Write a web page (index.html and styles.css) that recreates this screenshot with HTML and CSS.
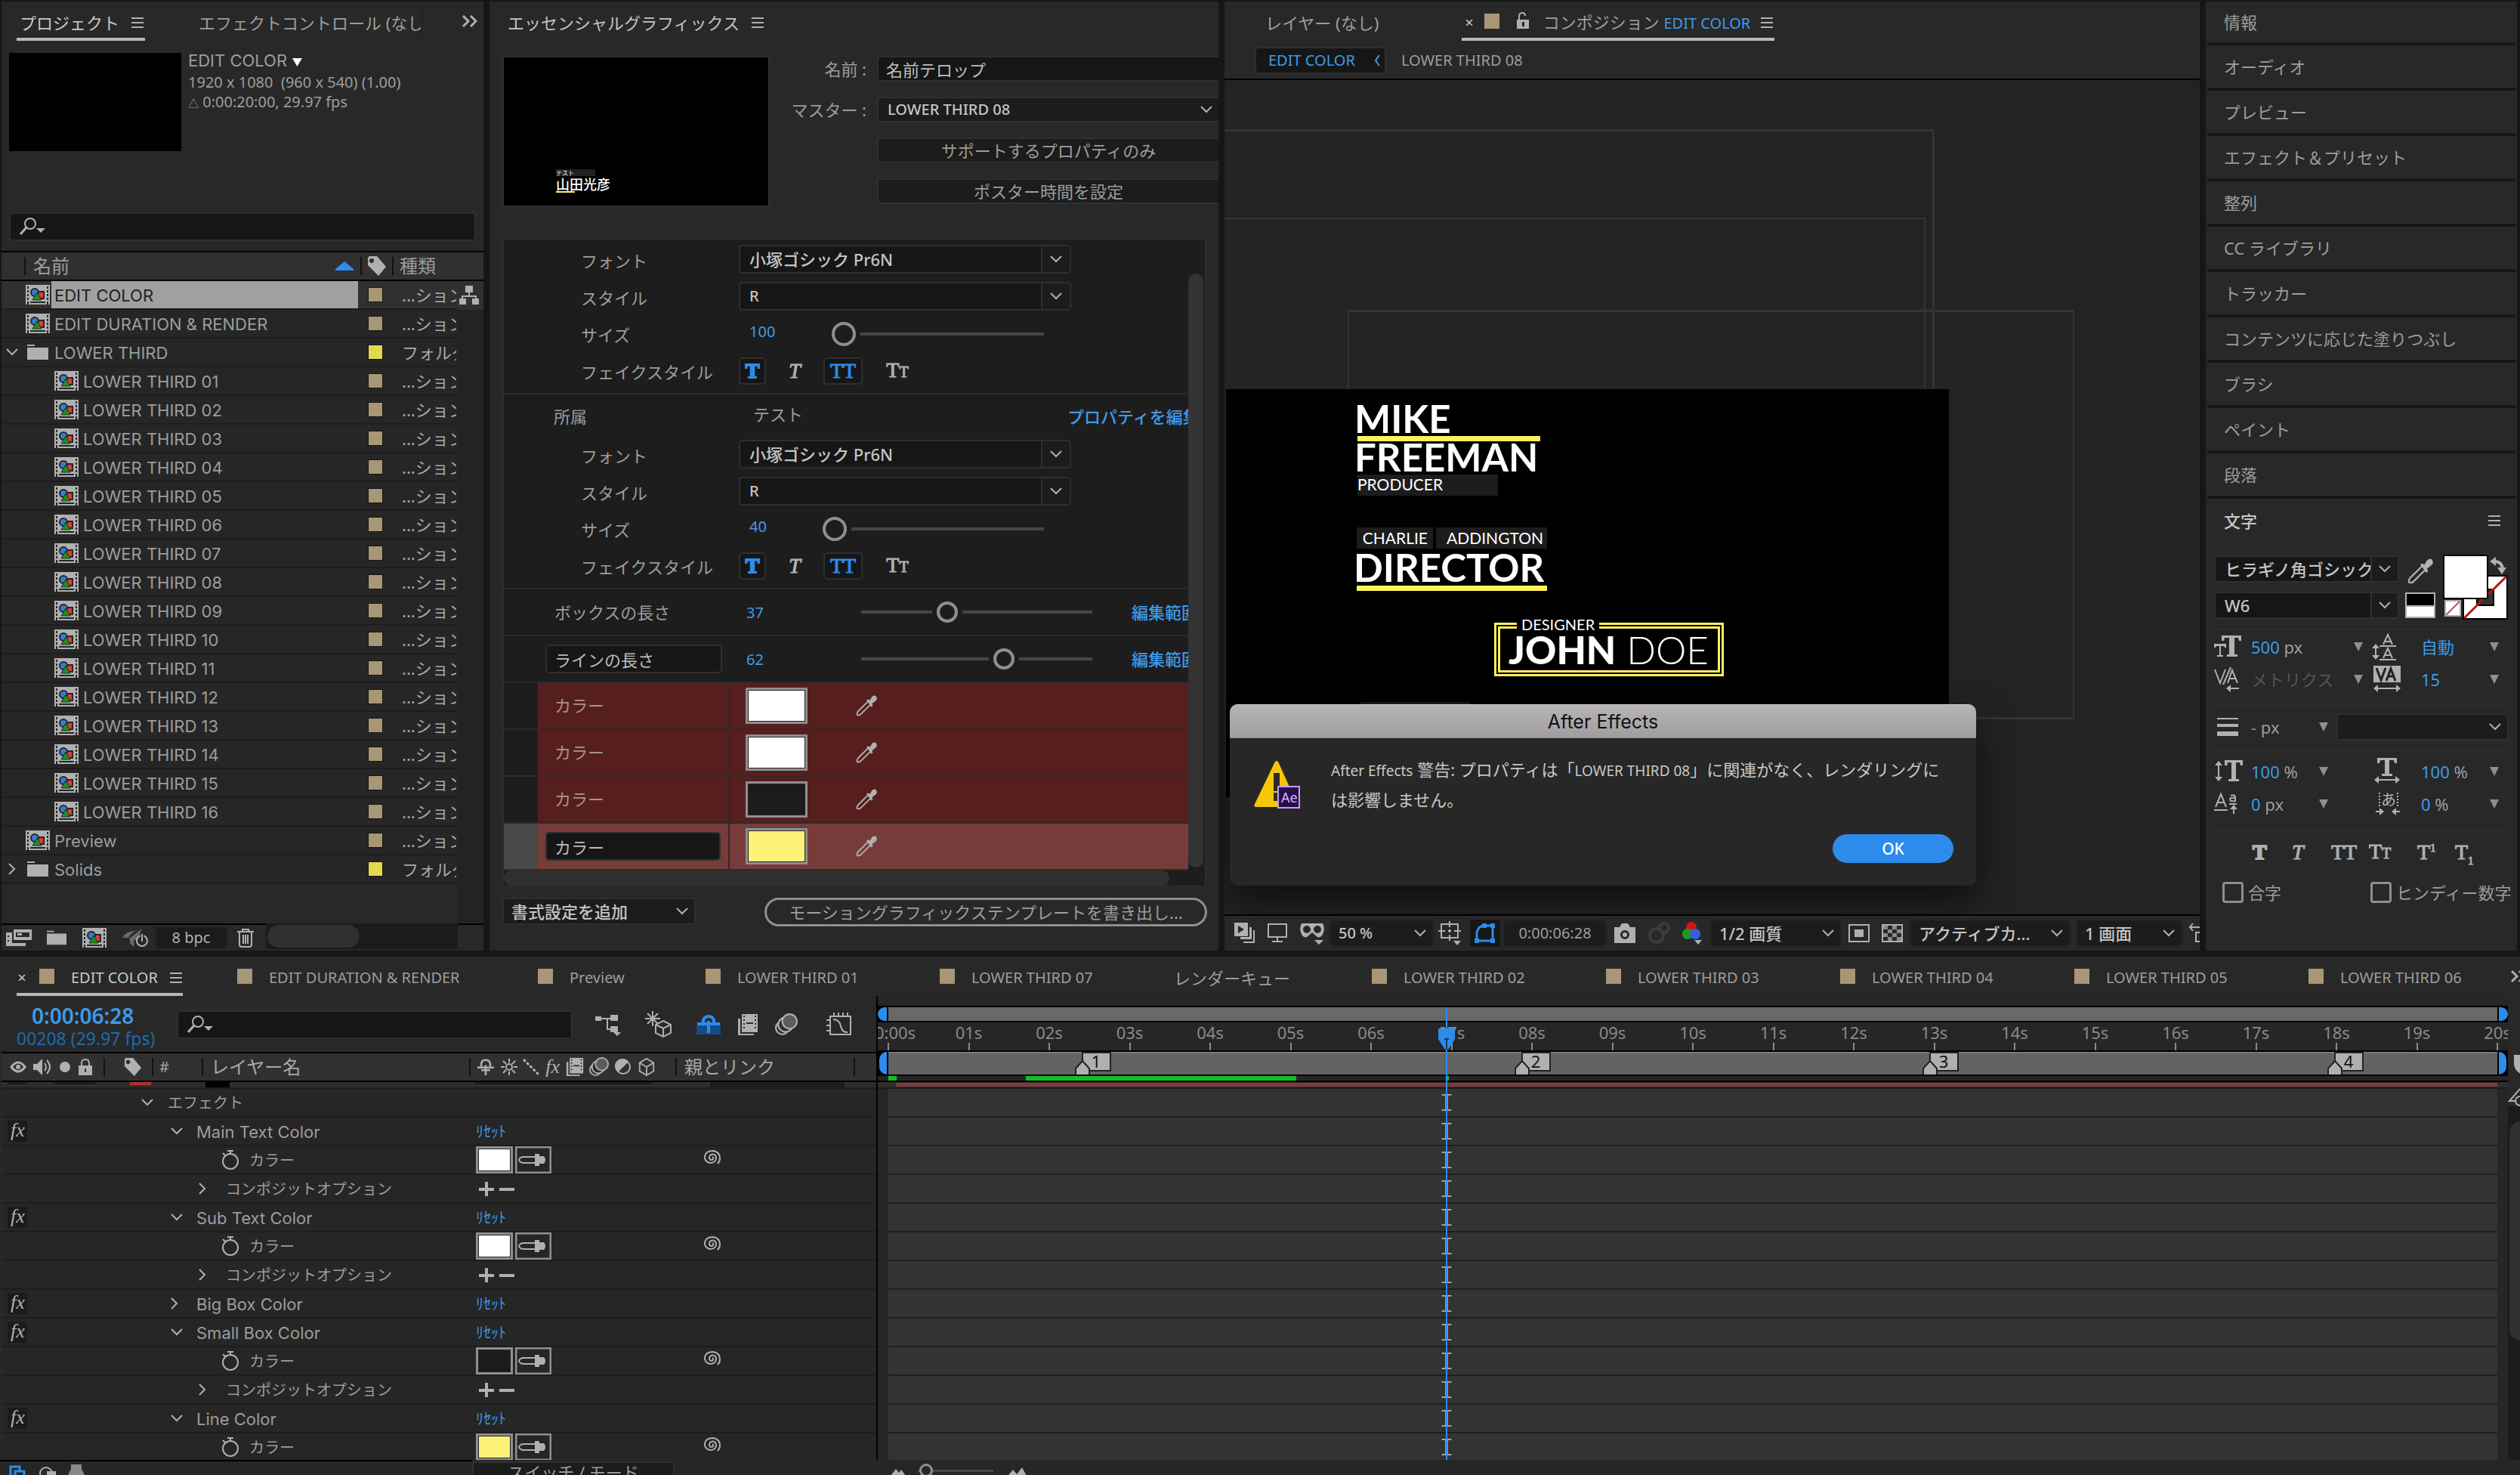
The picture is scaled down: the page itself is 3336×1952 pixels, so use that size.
FILE: index.html
```html
<!DOCTYPE html>
<html lang="ja">
<head>
<meta charset="utf-8">
<title>After Effects</title>
<link rel="stylesheet" href="styles.css">
</head>
<body>
<svg class="defs" aria-hidden="true">
  <symbol id="menu" viewBox="0 0 16 14"><path fill="currentColor" d="M0 0h16v2H0zM0 6h16v2H0zM0 12h16v2H0z"/></symbol>
  <symbol id="down" viewBox="0 0 16 10"><path fill="none" stroke="currentColor" stroke-width="2" d="M1 1l7 7 7-7"/></symbol>
  <symbol id="right" viewBox="0 0 10 16"><path fill="none" stroke="currentColor" stroke-width="2" d="M1 1l7 7-7 7"/></symbol>
  <symbol id="more" viewBox="0 0 20 16"><path fill="none" stroke="currentColor" stroke-width="3" d="M1 1l7 7-7 7M11 1l7 7-7 7"/></symbol>
  <symbol id="tri" viewBox="0 0 12 12"><path fill="currentColor" d="M0 0h12L6 12z"/></symbol>
  <symbol id="comp" viewBox="0 0 32 26"><path fill="#b0b0b0" d="M0 0h32v26H0z"/><path fill="#262626" d="M2 2h2v3H2zM2 7h2v3H2zM2 12h2v3H2zM2 17h2v3H2zM2 22h2v4H2zM28 2h2v3h-2zM28 7h2v3h-2zM28 12h2v3h-2zM28 17h2v3h-2zM28 22h2v4h-2zM6 22h20v2H6z"/><path fill="#e23b36" stroke="#262626" stroke-width="2" d="M14 9h10v9H14z"/><circle cx="12" cy="10" r="5" fill="#2f7fd6" stroke="#262626" stroke-width="2"/><path fill="#1a9121" stroke="#262626" d="M15 10l6 10H9z"/></symbol>
  <symbol id="folder" viewBox="0 0 28 20"><path fill="#b0b0b0" d="M0 0h10v2H0zM0 4h28v16H0z"/></symbol>
  <symbol id="tag" viewBox="0 0 24 26"><path fill="#b0b0b0" fill-rule="evenodd" d="M0 2l2-2h10l12 14-10 12L0 12zM5 3a3 3 0 100 6 3 3 0 000-6z"/></symbol>
  <symbol id="search" viewBox="0 0 34 24"><circle cx="14" cy="8" r="7" fill="none" stroke="#b0b0b0" stroke-width="2"/><path stroke="#b0b0b0" stroke-width="3" d="M9 13L1 22"/><path fill="#b0b0b0" d="M22 14h12l-6 6z"/></symbol>
  <symbol id="dropper" viewBox="0 0 30 30"><path fill="none" stroke="#b0b0b0" stroke-width="2" d="M17 9L3 23q-2 3-1 5 3 1 5-1l14-14"/><path fill="#b0b0b0" d="M15 7l2-1 3 1 3-5q4-3 6 0 2 4-1 6l-5 4 1 3-2 2z"/></symbol>
  <symbol id="watch" viewBox="0 0 22 26"><circle cx="11" cy="15" r="10" fill="none" stroke="#b0b0b0" stroke-width="2"/><path stroke="#b0b0b0" stroke-width="2" d="M7 1h8M11 1v4M1 4l4 4"/></symbol>
  <symbol id="spiral" viewBox="0 0 24 22"><path fill="none" stroke="#b0b0b0" stroke-width="2" d="M12 9c2 1 1 4-1 4-3 0-4-3-2-6 3-3 8-1 8 3 0 5-4 7-8 7-5-1-8-5-7-9 1-5 6-7 11-7 6 1 9 5 9 10 0 3-1 5-3 7"/></symbol>
  <symbol id="pipette" viewBox="0 0 48 36"><path fill="none" stroke="#8f8f8f" stroke-width="3" d="M1 1h46v34H1z"/><path fill="none" stroke="#b0b0b0" stroke-width="2" d="M28 14H12q-6 0-7 4 1 4 7 4h16"/><path fill="#b0b0b0" d="M26 10h6v3h6q4 5 0 10h-6v3h-6z"/></symbol>
  <symbol id="shy" viewBox="0 0 26 26"><path fill="none" stroke="currentColor" stroke-width="3" d="M6 12V8q1-6 7-6t7 6v4M0 14h26M13 10v16M6 18h14"/></symbol>
  <symbol id="film" viewBox="0 0 26 28"><path fill="#b0b0b0" d="M5 0h21v24H5zM0 6h3v20h18v2H0z"/><path fill="#2c2c2c" d="M7 2h2v2H7zM7 7h2v2H7zM7 12h2v2H7zM7 17h2v2H7zM22 2h2v2h-2zM22 7h2v2h-2zM22 12h2v2h-2zM22 17h2v2h-2zM11 11h9v2h-9z"/></symbol>
  <symbol id="blur" viewBox="0 0 28 28"><circle cx="9" cy="18" r="8" fill="none" stroke="#b0b0b0" stroke-width="2"/><circle cx="13" cy="14" r="9" fill="#2c2c2c" stroke="#b0b0b0" stroke-width="2"/><circle cx="18" cy="10" r="9" fill="#5c5c5c" stroke="#b0b0b0" stroke-width="2"/></symbol>
  <symbol id="cube" viewBox="0 0 24 26"><path fill="none" stroke="#b0b0b0" stroke-width="2" d="M12 1l10 6v12l-10 6-10-6V7zM2 7l10 6 10-6M12 13v12"/></symbol>
  <symbol id="lock" viewBox="0 0 20 22"><path fill="none" stroke="#b0b0b0" stroke-width="2" d="M5 10V6q0-5 5-5t5 5v4"/><path fill="#b0b0b0" fill-rule="evenodd" d="M1 9h18v13H1zM9 13v5h2v-5z"/></symbol>
  <symbol id="ibeam" viewBox="0 0 14 24"><path fill="#b0b0b0" d="M0 0h14v2H9v20h5v2H0v-2h5V2H0z"/></symbol>
  <symbol id="pin" viewBox="0 0 48 30"><path fill="#b0b0b0" stroke="#222" stroke-width="2" d="M10 1h37v24H19L10 20z"/><path fill="#b0b0b0" stroke="#222" stroke-width="2" d="M1 30V22l9-10 9 10v8"/></symbol>
</svg>

<main class="workspace">

<section class="panel project">
  <nav class="tabs">
    <button class="tab active first">プロジェクト<svg class="menu"><use href="#menu"/></svg></button>
    <button class="tab second"><span>エフェクトコントロール (なし)</span></button>
    <button class="icon-btn overflow" aria-label="その他"><svg width="20" height="16"><use href="#more"/></svg></button>
  </nav>
  <div class="info">
    <div class="thumb"></div>
    <div class="meta"><b class="sf">EDIT COLOR <i>▼</i></b>1920 x 1080&nbsp; (960 x 540) (1.00)<br><small>△</small> 0:00:20:00, 29.97 fps</div>
  </div>
  <label class="search"><svg width="34" height="24"><use href="#search"/></svg><input type="text" aria-label="検索"></label>
  <table class="files">
    <colgroup><col class="c-name"><col class="c-label"><col class="c-type"><col class="c-end"></colgroup>
    <thead><tr><th><div class="th-name"><span>名前</span><svg width="24" height="12"><path fill="#2d8ceb" d="M12 0l12 10v2H0v-2z"/></svg></div></th><th><div class="th-sep"><svg width="24" height="26"><use href="#tag"/></svg></div></th><th colspan="2"><div class="th-sep wide">種類</div></th></tr></thead>
    <tbody>
    <tr class="sel"><td><div class="f"><svg class="ic"><use href="#comp"/></svg><span>EDIT COLOR</span></div></td><td><i class="sw"></i></td><td>...ション</td><td class="end"><svg width="26" height="26"><path fill="#b0b0b0" d="M8 0h10v9H8zM0 17h9v8H0zM17 17h9v8h-9zM12 9h2v4h9v4h-2v-2H5v2H3v-4h9z"/></svg></td></tr>
    <tr><td><div class="f"><svg class="ic"><use href="#comp"/></svg><span>EDIT DURATION &amp; RENDER</span></div></td><td><i class="sw"></i></td><td>...ション</td><td class="end"></td></tr>
    <tr><td><div class="f open"><svg class="tw" width="16" height="10"><use href="#down"/></svg><svg class="fo"><use href="#folder"/></svg><span>LOWER THIRD</span></div></td><td><i class="sw y"></i></td><td>フォルダー</td><td class="end"></td></tr>
    <tr><td><div class="f kid"><svg class="ic"><use href="#comp"/></svg><span>LOWER THIRD 01</span></div></td><td><i class="sw"></i></td><td>...ション</td><td class="end"></td></tr>
    <tr><td><div class="f kid"><svg class="ic"><use href="#comp"/></svg><span>LOWER THIRD 02</span></div></td><td><i class="sw"></i></td><td>...ション</td><td class="end"></td></tr>
    <tr><td><div class="f kid"><svg class="ic"><use href="#comp"/></svg><span>LOWER THIRD 03</span></div></td><td><i class="sw"></i></td><td>...ション</td><td class="end"></td></tr>
    <tr><td><div class="f kid"><svg class="ic"><use href="#comp"/></svg><span>LOWER THIRD 04</span></div></td><td><i class="sw"></i></td><td>...ション</td><td class="end"></td></tr>
    <tr><td><div class="f kid"><svg class="ic"><use href="#comp"/></svg><span>LOWER THIRD 05</span></div></td><td><i class="sw"></i></td><td>...ション</td><td class="end"></td></tr>
    <tr><td><div class="f kid"><svg class="ic"><use href="#comp"/></svg><span>LOWER THIRD 06</span></div></td><td><i class="sw"></i></td><td>...ション</td><td class="end"></td></tr>
    <tr><td><div class="f kid"><svg class="ic"><use href="#comp"/></svg><span>LOWER THIRD 07</span></div></td><td><i class="sw"></i></td><td>...ション</td><td class="end"></td></tr>
    <tr><td><div class="f kid"><svg class="ic"><use href="#comp"/></svg><span>LOWER THIRD 08</span></div></td><td><i class="sw"></i></td><td>...ション</td><td class="end"></td></tr>
    <tr><td><div class="f kid"><svg class="ic"><use href="#comp"/></svg><span>LOWER THIRD 09</span></div></td><td><i class="sw"></i></td><td>...ション</td><td class="end"></td></tr>
    <tr><td><div class="f kid"><svg class="ic"><use href="#comp"/></svg><span>LOWER THIRD 10</span></div></td><td><i class="sw"></i></td><td>...ション</td><td class="end"></td></tr>
    <tr><td><div class="f kid"><svg class="ic"><use href="#comp"/></svg><span>LOWER THIRD 11</span></div></td><td><i class="sw"></i></td><td>...ション</td><td class="end"></td></tr>
    <tr><td><div class="f kid"><svg class="ic"><use href="#comp"/></svg><span>LOWER THIRD 12</span></div></td><td><i class="sw"></i></td><td>...ション</td><td class="end"></td></tr>
    <tr><td><div class="f kid"><svg class="ic"><use href="#comp"/></svg><span>LOWER THIRD 13</span></div></td><td><i class="sw"></i></td><td>...ション</td><td class="end"></td></tr>
    <tr><td><div class="f kid"><svg class="ic"><use href="#comp"/></svg><span>LOWER THIRD 14</span></div></td><td><i class="sw"></i></td><td>...ション</td><td class="end"></td></tr>
    <tr><td><div class="f kid"><svg class="ic"><use href="#comp"/></svg><span>LOWER THIRD 15</span></div></td><td><i class="sw"></i></td><td>...ション</td><td class="end"></td></tr>
    <tr><td><div class="f kid"><svg class="ic"><use href="#comp"/></svg><span>LOWER THIRD 16</span></div></td><td><i class="sw"></i></td><td>...ション</td><td class="end"></td></tr>
    <tr><td><div class="f"><svg class="ic"><use href="#comp"/></svg><span>Preview</span></div></td><td><i class="sw"></i></td><td>...ション</td><td class="end"></td></tr>
    <tr><td><div class="f open"><svg class="tw" width="16" height="16"><use href="#right"/></svg><svg class="fo"><use href="#folder"/></svg><span>Solids</span></div></td><td><i class="sw y"></i></td><td>フォルダー</td><td class="end"></td></tr>
    </tbody>
  </table>
  <div class="fill"><div class="gutter"></div></div>
  <footer class="pfoot">
    <button class="icon-btn" aria-label="フッテージを変換"><svg width="34" height="22"><path fill="#b0b0b0" fill-rule="evenodd" d="M10 0h24v14H10zM13 4v6h18V4zM0 4h8v14h18v4H0zM2 8v2h2V8zM2 14v2h2v-2z"/><path fill="#b0b0b0" d="M15 5h6v3h-6z"/></svg></button>
    <button class="icon-btn" aria-label="新規フォルダー"><svg width="26" height="20"><use href="#folder"/></svg></button>
    <button class="icon-btn" aria-label="新規コンポジション"><svg width="34" height="26"><use href="#comp"/></svg></button>
    <button class="icon-btn" aria-label="プロジェクト設定"><svg width="34" height="26"><path fill="#6a6a6a" d="M26 1q-12 2-18 12H0q3-6 10-8l6-1zM10 15l6 4-1 6-5-5zM26 1l-6 13-8 5-3-5z"/><circle cx="26" cy="17" r="7" fill="#282828" stroke="#b0b0b0" stroke-width="2"/><path stroke="#282828" stroke-width="5" d="M26 8v6"/><path stroke="#b0b0b0" stroke-width="2" d="M26 8v10"/></svg></button>
    <button class="bpc">8 bpc</button>
    <button class="icon-btn" aria-label="削除"><svg width="22" height="26"><path fill="none" stroke="#b0b0b0" stroke-width="2" d="M0 5h22M7 5V2h8v3M3 5v17q0 3 3 3h10q3 0 3-3V5M8 9v12M11 9v12M14 9v12"/></svg></button>
    <div class="hscroll"><i></i></div>
  </footer>
</section>

<section class="panel eg">
  <nav class="tabs"><button class="tab">エッセンシャルグラフィックス<svg class="menu"><use href="#menu"/></svg></button></nav>
  <div class="eg-top">
    <div class="poster"><div class="telop"><small>テスト</small><b>山田光彦</b></div></div>
    <div class="eg-form">
      <label for="egname">名前 :</label><input id="egname" class="field" type="text" value="名前テロップ">
      <label for="egmaster">マスター :</label><div class="select"><select id="egmaster" class="en"><option>LOWER THIRD 08</option></select><svg width="16" height="10"><use href="#down"/></svg></div>
      <button class="flat">サポートするプロパティのみ</button>
      <button class="flat">ポスター時間を設定</button>
    </div>
  </div>
  <div class="scroller">
    <div class="props">
      <div class="group top">
        <div class="sub"><label for="f1">フォント</label><div class="select split"><select id="f1"><option>小塚ゴシック Pr6N</option></select><svg width="16" height="10"><use href="#down"/></svg></div></div>
        <div class="sub"><label for="s1">スタイル</label><div class="select split"><select id="s1" class="en"><option>R</option></select><svg width="16" height="10"><use href="#down"/></svg></div></div>
        <div class="sub"><label for="z1">サイズ</label><output>100</output><input id="z1" class="size" type="range" min="25" max="1340" value="100"></div>
        <div class="sub"><span>フェイクスタイル</span><div class="fake"><button class="on b">T</button><button class="i">T</button><button class="on">TT</button><button>T<small>T</small></button></div></div>
      </div>
      <div class="group">
        <div class="head"><span>所属</span><span class="val">テスト</span><a href="#edit">プロパティを編集</a></div>
        <div class="sub"><label for="f2">フォント</label><div class="select split"><select id="f2"><option>小塚ゴシック Pr6N</option></select><svg width="16" height="10"><use href="#down"/></svg></div></div>
        <div class="sub"><label for="s2">スタイル</label><div class="select split"><select id="s2" class="en"><option>R</option></select><svg width="16" height="10"><use href="#down"/></svg></div></div>
        <div class="sub"><label for="z2">サイズ</label><output>40</output><input id="z2" class="size" type="range" min="25" max="1340" value="40"></div>
        <div class="sub"><span>フェイクスタイル</span><div class="fake"><button class="on b">T</button><button class="i">T</button><button class="on">TT</button><button>T<small>T</small></button></div></div>
      </div>
      <div class="len"><label for="l1">ボックスの長さ</label><output>37</output><input id="l1" type="range" min="4" max="96" value="37"><a href="#range1">編集範囲</a></div>
      <div class="len"><input class="field" type="text" value="ラインの長さ" aria-label="名前"><output>62</output><input type="range" min="4" max="96" value="62" aria-label="ラインの長さ"><a href="#range2">編集範囲</a></div>
      <div class="color"><i></i><span>カラー</span><div><button class="chip" aria-label="カラー"></button><button class="icon-btn" aria-label="スポイト"><svg width="28" height="30"><use href="#dropper"/></svg></button></div></div>
      <div class="color"><i></i><span>カラー</span><div><button class="chip" aria-label="カラー"></button><button class="icon-btn" aria-label="スポイト"><svg width="28" height="30"><use href="#dropper"/></svg></button></div></div>
      <div class="color"><i></i><span>カラー</span><div><button class="chip dark" aria-label="カラー"></button><button class="icon-btn" aria-label="スポイト"><svg width="28" height="30"><use href="#dropper"/></svg></button></div></div>
      <div class="color picked"><i></i><span><input class="field" type="text" value="カラー" aria-label="名前"></span><div><button class="chip yellow" aria-label="カラー"></button><button class="icon-btn" aria-label="スポイト"><svg width="28" height="30"><use href="#dropper"/></svg></button></div></div>
    </div>
    <div class="vbar"></div>
    <div class="hbar"></div>
  </div>
  <footer class="eg-foot">
    <div class="select add"><select aria-label="書式設定"><option>書式設定を追加</option></select><svg width="16" height="10"><use href="#down"/></svg></div>
    <button class="export">モーショングラフィックステンプレートを書き出し...</button>
  </footer>
</section>

<section class="panel viewer">
  <nav class="tabs">
    <button class="tab none">レイヤー (なし)</button>
    <button class="tab active comp"><span class="x">×</span><i class="sq"></i><svg width="18" height="22"><path fill="none" stroke="#b0b0b0" stroke-width="2" d="M4 11V6q0-5 4-5t4 4"/><path fill="#b0b0b0" fill-rule="evenodd" d="M1 10h16v12H1zM8 13v6h3v-6z"/></svg><span class="nm">コンポジション <em>EDIT COLOR</em></span><svg class="menu"><use href="#menu"/></svg></button>
  </nav>
  <div class="crumbs"><button class="crumb">EDIT COLOR<svg width="8" height="16"><path fill="none" stroke="#3d9be9" stroke-width="2" d="M7 1L2 8l5 7"/></svg></button><a href="#lt08">LOWER THIRD 08</a></div>
  <div class="stage">
    <div class="guide g1"></div><div class="guide g2"></div><div class="guide g3"></div>
    <div class="black">
      <div class="t1"><b>MIKE</b><hr><b class="low">FREEMAN</b><span>PRODUCER</span></div>
      <div class="t2"><p><span>CHARLIE</span><span>ADDINGTON</span></p><b>DIRECTOR</b><hr></div>
      <div class="t3"><span>DESIGNER</span><p><b>JOHN</b> DOE</p></div>
      <div class="t4"></div>
    </div>
    <dialog open aria-labelledby="dt">
      <h2 id="dt">After Effects</h2>
      <div class="dbody">
        <svg width="62" height="64" viewBox="0 0 62 64"><path fill="#f5c60a" d="M30 1q2 0 3 3l24 54q1 4-3 4H3q-4 0-2-4L27 4q1-3 3-3z"/><path fill="#2b2b2b" d="M26 17h8v24h-8zM26 43h8v11h-8z"/><path fill="#2a0d4e" stroke="#c8a0f0" stroke-width="2" d="M32 35h28v28H32z"/><text x="36" y="56" font-family="Noto Sans, sans-serif" font-size="18" fill="#d9b3ff">Ae</text></svg>
        <p><span>After Effects</span> 警告: プロパティは「<span>LOWER THIRD 08</span>」に関連がなく、レンダリングに<br>は影響しません。</p>
      </div>
      <button class="ok">OK</button>
    </dialog>
  </div>
  <footer class="vfoot">
    <svg width="28" height="28"><path fill="#b0b0b0" fill-rule="evenodd" d="M0 0h18v18H0zM5 4v10l8-5zM20 6h3v16H8v-3h12zM25 10h2v17H12v-2h13z"/></svg>
    <svg width="26" height="26"><path fill="none" stroke="#b0b0b0" stroke-width="2" d="M1 1h24v17H1zM6 24h14M13 18v6"/></svg>
    <svg width="34" height="30"><path fill="#b0b0b0" fill-rule="evenodd" d="M3 2h28q3 6 1 12-3 8-8 6l-7-6-7 6q-5 2-8-6-2-6 1-12zM10 5a5 5 0 100 10 5 5 0 000-10zM24 5a5 5 0 100 10 5 5 0 000-10zM20 24h12l-6 6z"/></svg>
    <div class="select w50"><select class="en" aria-label="倍率"><option>50 %</option></select><svg width="16" height="10"><use href="#down"/></svg></div>
    <svg width="32" height="32"><path fill="none" stroke="#b0b0b0" stroke-width="2" d="M4 4h22v18H4zM15 0v8M15 18v8M0 13h9M21 13h9M13 13h4M15 11v4"/><path fill="#b0b0b0" d="M20 26h10l-5 6z"/></svg>
    <button class="maskb" aria-label="マスク"><svg width="28" height="26"><path fill="none" stroke="#2d8ceb" stroke-width="3" d="M3 23V12q2-9 10-9h11v20z"/><path fill="#2d8ceb" d="M0 20h6v6H0zM21 20h6v6h-6zM21 0h6v6h-6zM10 0h6v6h-6z"/></svg></button>
    <button class="time">0:00:06:28</button>
    <svg width="28" height="26"><path fill="#b0b0b0" fill-rule="evenodd" d="M0 5h7l3-5h8l3 5h7v21H0zM14 9a6 6 0 100 12 6 6 0 000-12z"/><circle cx="14" cy="15" r="3" fill="#b0b0b0"/></svg>
    <svg width="30" height="30"><circle cx="12" cy="18" r="9" fill="none" stroke="#3c3c3c" stroke-width="4"/><circle cx="22" cy="8" r="6" fill="none" stroke="#3c3c3c" stroke-width="4"/></svg>
    <svg width="28" height="30"><circle cx="12" cy="7" r="7" fill="#d01414"/><circle cx="7" cy="16" r="7" fill="#1c9a1c"/><circle cx="17" cy="16" r="7" fill="#3460e0"/><path fill="#b0b0b0" d="M16 24h10l-5 6z"/></svg>
    <div class="select w12"><select aria-label="画質"><option>1/2 画質</option></select><svg width="16" height="10"><use href="#down"/></svg></div>
    <svg width="28" height="24"><path fill="none" stroke="#b0b0b0" stroke-width="2" d="M1 1h26v22H1z"/><path fill="#b0b0b0" d="M8 7h12v10H8z"/></svg>
    <svg width="28" height="24"><path fill="none" stroke="#b0b0b0" stroke-width="2" d="M1 1h26v22H1z"/><path fill="#8a8a8a" d="M2 2h6v5H2zM14 2h6v5h-6zM8 7h6v5H8zM20 7h6v5h-6zM2 12h6v5H2zM14 12h6v5h-6zM8 17h6v5H8zM20 17h6v5h-6z"/></svg>
    <div class="select wcam"><select aria-label="カメラ"><option>アクティブカ...</option></select><svg width="16" height="10"><use href="#down"/></svg></div>
    <div class="select w1"><select aria-label="画面"><option>1 画面</option></select><svg width="16" height="10"><use href="#down"/></svg></div>
    <svg class="cut" width="26" height="26"><path fill="none" stroke="#b0b0b0" stroke-width="2" d="M0 5h24M5 0L1 5l4 5M26 12H9v12h17"/></svg>
  </footer>
</section>

<aside class="panel side">
  <nav><a href="#p1">情報</a><a href="#p2">オーディオ</a><a href="#p3">プレビュー</a><a href="#p4">エフェクト＆プリセット</a><a href="#p5">整列</a><a href="#p6">CC ライブラリ</a><a href="#p7">トラッカー</a><a href="#p8">コンテンツに応じた塗りつぶし</a><a href="#p9">ブラシ</a><a href="#p10">ペイント</a><a href="#p11">段落</a></nav>
  <h2>文字<svg class="menu"><use href="#menu"/></svg></h2>
  <div class="chars">
    <div class="fontsel">
      <div class="select split"><select aria-label="フォント"><option>ヒラギノ角ゴシック</option></select><svg width="16" height="10"><use href="#down"/></svg></div>
      <div class="select split"><select aria-label="ウェイト"><option>W6</option></select><svg width="16" height="10"><use href="#down"/></svg></div>
    </div>
    <div class="mid"><svg width="34" height="34"><use href="#dropper"/></svg><svg width="40" height="34"><path fill="#000" d="M1 1h38v16H1z"/><path fill="#fff" d="M1 17h38v16H1z"/><path fill="none" stroke="#b0b0b0" stroke-width="2" d="M1 1h38v32H1zM1 18h38"/></svg></div>
    <svg class="paint" width="86" height="86"><path fill="#fff" stroke="#000" stroke-width="2" d="M27 28h58v57H27z"/><path fill="#333" stroke="#000" stroke-width="2" d="M45 46h22v21H45z"/><path stroke="#b81414" stroke-width="3" d="M28 84l56-55"/><path fill="#fff" stroke="#000" stroke-width="2" d="M1 1h58v57H1z"/><path fill="#fff" stroke="#b0b0b0" stroke-width="2" d="M3 61h20v20H3z"/><path stroke="#c05050" stroke-width="2" d="M4 80l18-18"/><path fill="none" stroke="#b0b0b0" stroke-width="4" d="M66 9q12-1 13 10"/><path fill="#b0b0b0" d="M62 9l8-6v12zM72 17h12l-6 9z"/></svg>
  </div>
  <div class="metrics a">
    <svg width="36" height="30"><path fill="#b0b0b0" d="M10 0h26v7h-3l-1-4h-5v22h4v3H17v-3h3V3h-6l-1 4h-3zM0 11h16v5h-2l-1-2H9v12h3v2H4v-2h3V14H3l-1 2H0z"/></svg><span><em>500</em> px</span><svg class="tri"><use href="#tri"/></svg>
    <svg width="34" height="36"><path fill="none" stroke="#b0b0b0" stroke-width="2" d="M5 18v15M10 17h22M10 35h22M15 15l6-13 6 13M17 11h8M15 33l6-13 6 13M17 29h8"/><path fill="#b0b0b0" d="M0 20l5-6 5 6zM0 29l5 6 5-6z"/></svg><span><em>自動</em></span><svg class="tri"><use href="#tri"/></svg>
    <svg width="36" height="34"><path fill="none" stroke="#b0b0b0" stroke-width="2" d="M1 4l7 18 7-18M12 24L22 1M18 22l6-17 7 17M20 16h9M18 29h15"/><path fill="#b0b0b0" d="M16 29l6-5v10z"/></svg><span class="off">メトリクス</span><svg class="tri"><use href="#tri"/></svg>
    <svg width="38" height="36"><path fill="#b0b0b0" d="M2 0h36v22H2z"/><path fill="none" stroke="#222" stroke-width="3" d="M6 3l6 16 6-16M19 20l6-16 6 16M21 14h9"/><path stroke="#b0b0b0" stroke-width="2" d="M5 30h30"/><path fill="#b0b0b0" d="M2 30l6-5v10zM38 30l-6-5v10z"/></svg><span><em>15</em></span><svg class="tri"><use href="#tri"/></svg>
  </div>
  <div class="metrics b">
    <svg width="32" height="24"><path fill="#b0b0b0" d="M4 0h28v2H4zM4 8h28v4H4zM4 18h28v6H4z"/></svg><span><em>-</em> px</span><svg class="tri"><use href="#tri"/></svg>
    <div class="select"><select aria-label="線の種類"><option></option></select><svg width="16" height="10"><use href="#down"/></svg></div>
  </div>
  <div class="metrics c">
    <svg width="38" height="30"><path fill="#b0b0b0" d="M14 0h24v7h-3l-1-4h-5v22h4v3H19v-3h4V3h-5l-1 4h-3zM5 5h2v18H5z"/><path fill="#b0b0b0" d="M1 7l5-6 5 6zM1 22l5 6 5-6z"/></svg><span><em>100</em> %</span><svg class="tri"><use href="#tri"/></svg>
    <svg width="36" height="36"><path fill="#b0b0b0" d="M5 0h26v7h-3l-1-4h-6v18h4v3H11v-3h4V3H9L8 7H5zM6 28h24v2H6z"/><path fill="#b0b0b0" d="M1 29l6-5v10zM35 29l-6-5v10z"/></svg><span><em>100</em> %</span><svg class="tri"><use href="#tri"/></svg>
    <svg width="34" height="30"><path fill="none" stroke="#b0b0b0" stroke-width="2" d="M2 19L9 2l7 17M5 13h9M0 23h18M20 15h10M26 28V18M22 4q6-2 6 2v5q-7 1-7-2t7-2"/><path fill="#b0b0b0" d="M21 22l5-6 5 6z"/></svg><span><em>0</em> px</span><svg class="tri"><use href="#tri"/></svg>
    <svg width="36" height="32"><path fill="none" stroke="#b0b0b0" stroke-width="2" stroke-dasharray="2 2" d="M8 1v18M32 1v18"/><path stroke="#b0b0b0" stroke-width="2" d="M3 26h8M25 26h10"/><path fill="#b0b0b0" d="M8 21l6 5-6 5zM30 21l-6 5 6 5z"/><text x="10" y="18" font-family="Noto Sans CJK JP" font-size="20" fill="#b0b0b0">あ</text></svg><span><em>0</em> %</span><svg class="tri"><use href="#tri"/></svg>
  </div>
  <div class="styles"><button class="b">T</button><button class="i">T</button><button>TT</button><button>T<small>T</small></button><button>T<sup>1</sup></button><button>T<sub>1</sub></button></div>
  <div class="checks"><label><input type="checkbox">合字</label><label><input type="checkbox">ヒンディー数字</label></div>
</aside>
</main>

<section class="panel timeline">
  <nav class="tabs">
    <button class="tab active tl0"><span class="x">×</span><i class="sq"></i>EDIT COLOR<svg class="menu"><use href="#menu"/></svg></button>
    <button class="tab t398"><i class="sq"></i>EDIT DURATION &amp; RENDER</button>
    <button class="tab t222"><i class="sq"></i>Preview</button>
    <button class="tab t310"><i class="sq"></i>LOWER THIRD 01</button>
    <button class="tab t310"><i class="sq"></i>LOWER THIRD 07</button>
    <button class="tab queue">レンダーキュー</button>
    <button class="tab t310"><i class="sq"></i>LOWER THIRD 02</button>
    <button class="tab t310"><i class="sq"></i>LOWER THIRD 03</button>
    <button class="tab t310"><i class="sq"></i>LOWER THIRD 04</button>
    <button class="tab t310"><i class="sq"></i>LOWER THIRD 05</button>
    <button class="tab t310 last"><i class="sq"></i>LOWER THIRD 06</button>
    <button class="icon-btn" aria-label="その他"><svg width="20" height="16"><use href="#more"/></svg></button>
  </nav>
  <div class="tl">
    <div class="layers">
      <div class="bar">
        <div class="tc"><b>0:00:06:28</b><span>00208 (29.97 fps)</span></div>
        <label class="search"><svg width="34" height="24"><use href="#search"/></svg><input type="text" aria-label="レイヤー検索"></label>
        <div class="tools">
          <svg width="34" height="30"><path fill="#b0b0b0" d="M0 4h8v6H0zM20 2h10v8H20zM20 17h10v8H20zM8 6h12v2h-3v12h3v2h-5V8H8zM24 25h10l-5 5z"/></svg>
          <svg width="36" height="36"><path stroke="#b0b0b0" stroke-width="2" d="M10 0v20M0 10h20M3 3l14 14M17 3L3 17"/><path fill="#282828" stroke="#b0b0b0" stroke-width="2" d="M24 13l10 5v11l-10 5-10-5V18zM14 18l10 5 10-5M24 23v11"/></svg>
          <svg width="32" height="26"><path fill="#174d86" d="M0 14h32v12H0z"/><path fill="none" stroke="#2d8ceb" stroke-width="4" d="M9 11V7q2-5 7-5t7 5v4M1 12h30M16 8v16"/></svg>
          <svg width="28" height="28"><use href="#film"/></svg>
          <svg width="30" height="30"><use href="#blur"/></svg>
          <svg width="34" height="32"><path fill="none" stroke="#b0b0b0" stroke-width="2" d="M5 5h27v24H5zM10 0v5M16 0v5M22 0v5M28 0v5M0 10h4M0 17h4M0 24h4M9 9q8 0 10 9t9 8"/></svg>
        </div>
      </div>
      <div class="cols">
        <div class="k1"><svg width="22" height="16"><path fill="none" stroke="#b0b0b0" stroke-width="3" d="M2 8q9-12 18 0-9 12-18 0z"/><circle cx="11" cy="8" r="3" fill="#b0b0b0"/></svg><svg width="26" height="22"><path fill="#b0b0b0" d="M0 7h5l7-7v22l-7-7H0z"/><path fill="none" stroke="#b0b0b0" stroke-width="2" d="M15 6q4 5 0 10M18 2q8 9 0 18"/></svg><svg width="16" height="16"><circle cx="8" cy="8" r="7" fill="#b0b0b0"/></svg><svg width="20" height="22"><use href="#lock"/></svg></div>
        <div class="k2"><svg width="24" height="24"><use href="#tag"/></svg></div>
        <div class="k3">#</div>
        <div class="k4">レイヤー名</div>
        <div class="k5"><svg width="24" height="22"><use href="#shy"/></svg><svg width="22" height="22"><circle cx="11" cy="11" r="4" fill="none" stroke="#b0b0b0" stroke-width="2"/><path stroke="#b0b0b0" stroke-width="2" d="M11 0v5M11 17v5M0 11h5M17 11h5M3 3l4 4M15 15l4 4M19 3l-4 4M7 15l-4 4"/></svg><svg width="22" height="22"><path stroke="#b0b0b0" stroke-width="3" stroke-dasharray="4 2" d="M1 1l20 20"/></svg><i class="fx">fx</i><svg width="24" height="24"><use href="#film"/></svg><svg width="26" height="26"><use href="#blur"/></svg><svg width="22" height="22"><circle cx="11" cy="11" r="9" fill="none" stroke="#b0b0b0" stroke-width="2"/><path fill="#b0b0b0" d="M18 4A10 10 0 104 18z"/></svg><svg width="24" height="24"><use href="#cube"/></svg></div>
        <div class="k6">親とリンク</div>
        <div class="k7"></div>
      </div>
      <div class="peek"><i class="d1"></i><i class="d2"></i><i class="red"></i><i class="blk"></i><i class="d3"></i><i class="d4"></i></div>
      <ul class="rows">
        <li class="l0"><svg class="tw" width="16" height="10"><use href="#down"/></svg><span>エフェクト</span></li>
        <li class="l1"><i class="fx">fx</i><svg class="tw" width="16" height="10"><use href="#down"/></svg><span>Main Text Color</span><a href="#r1">ﾘｾｯﾄ</a></li>
        <li class="l2"><svg width="22" height="26"><use href="#watch"/></svg><span>カラー</span><button class="chip" aria-label="カラー"></button><svg class="pp"><use href="#pipette"/></svg><svg class="sp"><use href="#spiral"/></svg></li>
        <li class="l3"><svg class="tw" width="10" height="16"><use href="#right"/></svg><span>コンポジットオプション</span><svg width="50" height="20"><path fill="#b0b0b0" d="M0 9h8V1h4v8h8v4h-8v7H8v-7H0zM27 9h20v4H27z"/></svg></li>
        <li class="l1"><i class="fx">fx</i><svg class="tw" width="16" height="10"><use href="#down"/></svg><span>Sub Text Color</span><a href="#r2">ﾘｾｯﾄ</a></li>
        <li class="l2"><svg width="22" height="26"><use href="#watch"/></svg><span>カラー</span><button class="chip" aria-label="カラー"></button><svg class="pp"><use href="#pipette"/></svg><svg class="sp"><use href="#spiral"/></svg></li>
        <li class="l3"><svg class="tw" width="10" height="16"><use href="#right"/></svg><span>コンポジットオプション</span><svg width="50" height="20"><path fill="#b0b0b0" d="M0 9h8V1h4v8h8v4h-8v7H8v-7H0zM27 9h20v4H27z"/></svg></li>
        <li class="l1"><i class="fx">fx</i><svg class="tw" width="16" height="16" viewBox="3 0 10 16"><use href="#right" width="10" height="16"/></svg><span>Big Box Color</span><a href="#r3">ﾘｾｯﾄ</a></li>
        <li class="l1"><i class="fx">fx</i><svg class="tw" width="16" height="10"><use href="#down"/></svg><span>Small Box Color</span><a href="#r4">ﾘｾｯﾄ</a></li>
        <li class="l2"><svg width="22" height="26"><use href="#watch"/></svg><span>カラー</span><button class="chip dark" aria-label="カラー"></button><svg class="pp"><use href="#pipette"/></svg><svg class="sp"><use href="#spiral"/></svg></li>
        <li class="l3"><svg class="tw" width="10" height="16"><use href="#right"/></svg><span>コンポジットオプション</span><svg width="50" height="20"><path fill="#b0b0b0" d="M0 9h8V1h4v8h8v4h-8v7H8v-7H0zM27 9h20v4H27z"/></svg></li>
        <li class="l1"><i class="fx">fx</i><svg class="tw" width="16" height="10"><use href="#down"/></svg><span>Line Color</span><a href="#r5">ﾘｾｯﾄ</a></li>
        <li class="l2"><svg width="22" height="26"><use href="#watch"/></svg><span>カラー</span><button class="chip yellow" aria-label="カラー"></button><svg class="pp"><use href="#pipette"/></svg><svg class="sp"><use href="#spiral"/></svg></li>
      </ul>
    </div>
    <div class="time-area">
      <div class="nav"><i></i><div></div><i class="r"></i></div>
      <div class="rulerbox"><ol class="ruler"><li class="zero">0:00s</li><li>01s</li><li>02s</li><li>03s</li><li>04s</li><li>05s</li><li>06s</li><li>07s</li><li>08s</li><li>09s</li><li>10s</li><li>11s</li><li>12s</li><li>13s</li><li>14s</li><li>15s</li><li>16s</li><li>17s</li><li>18s</li><li>19s</li><li>20s</li></ol></div>
      <div class="work"><i></i><div>
        <span class="mark" style="left:12.070%"><svg><use href="#pin"/></svg><b>1</b></span><span class="mark" style="left:39.390%"><svg><use href="#pin"/></svg><b>2</b></span><span class="mark" style="left:64.740%"><svg><use href="#pin"/></svg><b>3</b></span><span class="mark" style="left:89.910%"><svg><use href="#pin"/></svg><b>4</b></span>
      </div><i class="r"></i></div>
      <div class="cache"><div><i style="left:0;width:.5%"></i><i style="left:8.540%;width:16.810%"></i><i style="left:34.700%;width:.15%"></i></div></div>
      <div class="clip"><div></div></div>
      <ul class="tracks"><li><svg><use href="#ibeam"/></svg></li><li><svg><use href="#ibeam"/></svg></li><li><svg><use href="#ibeam"/></svg></li><li><svg><use href="#ibeam"/></svg></li><li><svg><use href="#ibeam"/></svg></li><li><svg><use href="#ibeam"/></svg></li><li><svg><use href="#ibeam"/></svg></li><li><svg><use href="#ibeam"/></svg></li><li><svg><use href="#ibeam"/></svg></li><li><svg><use href="#ibeam"/></svg></li><li><svg><use href="#ibeam"/></svg></li><li><svg><use href="#ibeam"/></svg></li><li><svg><use href="#ibeam"/></svg></li></ul>
      <div class="playlane"><div class="playhead"><svg width="22" height="28"><path fill="#2d8ceb" d="M0 0h22v14l-9 14h-4L0 14z"/><path fill="#123a63" d="M8 13h6v2h-2v13h-2V15H8z"/></svg></div></div>
    </div>
    <div class="strip"><svg width="18" height="26"><path fill="#b0b0b0" d="M8 0h10v26q-10-6-10-14z"/></svg><svg width="18" height="24"><path fill="none" stroke="#b0b0b0" stroke-width="2" d="M16 1L2 17h8"/><circle cx="16" cy="17" r="6" fill="none" stroke="#b0b0b0" stroke-width="2"/></svg><i></i></div>
  </div>
  <footer class="tfoot">
    <div class="fl"><svg width="28" height="24"><path fill="none" stroke="#2d8ceb" stroke-width="3" d="M2 24V3h12v6M8 24V9h12v6M14 24V16h10v8"/></svg><svg width="24" height="24"><circle cx="9" cy="12" r="8" fill="none" stroke="#b0b0b0" stroke-width="2"/><path fill="#b0b0b0" d="M10 9h12v15H10z"/></svg><svg width="26" height="24"><path fill="#8a8a8a" d="M6 0h14v6l6 12-6 6H6l-6-6L6 6z"/></svg></div>
    <button class="switch">スイッチ / モード</button>
    <div class="zoom"><svg width="20" height="12"><path fill="#b0b0b0" d="M0 12l7-9 4 5 3-4 6 8z"/></svg><input type="range" min="0" max="100" value="2" aria-label="ズーム"><svg width="30" height="16"><path fill="#b0b0b0" d="M0 16L10 4l5 6 7-9 8 15z"/></svg></div>
  </footer>
</section>
</body>
</html>
```
FILE: styles.css
```css
* { box-sizing: border-box; }
body {
  margin: 0; padding-top: 2px; height: 100vh; overflow: hidden;
  display: flex; flex-direction: column; gap: 8px;
  background: #161616; color: #9d9d9d;
  font: 22px/28px "Noto Sans", "Noto Sans CJK JP", sans-serif;
}
button, input, select { font: inherit; color: inherit; margin: 0; padding: 0; border: 0; background: none; border-radius: 0; min-width: 0; }
button { white-space: nowrap; }
select { appearance: none; outline: 0; }
a { color: inherit; text-decoration: none; }
em { font-style: normal; color: #3d9be9; }
ul, ol { list-style: none; margin: 0; padding: 0; }
svg { display: block; flex: none; overflow: visible; color: #b0b0b0; }
.defs { position: absolute; width: 0; height: 0; }
.menu { width: 16px; height: 14px; }
.icon-btn { display: flex; align-items: center; flex: none; }

.workspace {
  flex: 1256 1 0; min-height: 0; display: grid; gap: 8px; padding: 0 4px 0 2px;
  grid-template-columns: minmax(0, 638fr) minmax(0, 965fr) minmax(0, 1291fr) minmax(0, 412fr);
  grid-template-rows: minmax(0, 1fr);
}
.panel { background: #282828; display: flex; flex-direction: column; overflow: hidden; min-width: 0; }

.tabs { display: flex; height: 52px; flex: none; }
.tab { display: flex; align-items: center; height: 52px; padding: 8px 4px 0; border-bottom: 4px solid transparent; gap: 16px; flex: none; }
.tab.active { color: #c8c8c8; border-color: #b8b8b8; }
.sq { width: 20px; height: 20px; background: #a89674; flex: none; }
.x { font-size: 20px; line-height: 20px; }

.field, .select { background: #161616; border: 2px solid #2f2f2f; border-radius: 5px; color: #bdbdbd; }
.field { height: 38px; padding: 0 10px; width: 100%; }
.select { display: grid; grid-template-columns: minmax(0, 1fr) auto; align-items: center; height: 36px; background: #1c1c1c; color: #c4c4c4; }
.select select { grid-area: 1 / 1 / 2 / 3; width: 100%; height: 100%; padding: 0 12px; font-weight: 500; }
.select svg { grid-area: 1 / 2; margin-right: 8px; pointer-events: none; }
.select.split { height: 38px; background: #161616; }
.select.split svg { box-sizing: content-box; padding: 12px 10px; margin: 0; border-left: 2px solid #2f2f2f; background: #1c1c1c; border-radius: 0 4px 4px 0; }
select.en { font-size: 20px; }

.search { display: flex; align-items: center; height: 38px; padding-left: 12px; background: #161616; border: 2px solid #2f2f2f; border-radius: 5px; }
.search input { flex: 1; height: 100%; margin-left: 8px; outline: 0; }

.chip { background: #fff; border: 3px solid #8f8f8f; outline: 1px solid #222; outline-offset: -4px; flex: none; }
.chip.dark { background: #1b1b1b; }
.chip.yellow { background: #fdf277; }

/* project */
.first { margin-left: 20px; padding-right: 2px; }
.second { margin-left: 67px; width: 300px; overflow: hidden; border-right: 2px solid #222; }
.overflow { margin: 0 8px 0 auto; }
.info { display: flex; gap: 9px; height: 227px; padding: 13px 10px 0; }
.thumb { width: 228px; height: 130px; margin-top: 3px; background: #000; }
.meta { font-size: 20px; line-height: 26px; white-space: nowrap; }
.meta b { display: block; font-weight: 400; line-height: 26px; }
.meta i { font-style: normal; color: #fff; font-size: 14px; }
.meta small { font-size: 14px; line-height: 20px; }
.sf { font-family: Inter, sans-serif; font-size: 22px; }
.project > .search { margin: 0 10px 13px; flex: none; }
.files { table-layout: fixed; width: 100%; border-spacing: 0; flex: none; }
.c-name { width: 475px; } .c-label { width: 42px; } .c-end { width: 36px; }
.files th { height: 40px; padding: 0; font-weight: 400; font-size: 24px; text-align: left; background: #303030; border: solid #000; border-width: 2px 0; }
.th-name { display: flex; justify-content: space-between; align-items: center; margin-left: 30px; padding: 0 9px 0 10px; height: 24px; border-left: 2px solid #111; }
.th-sep { height: 24px; display: flex; align-items: center; padding-left: 8px; border-left: 2px solid #111; }
.files td { height: 38px; padding: 0; border-bottom: 2px solid #1d1d1d; background: #262626; overflow: hidden; white-space: nowrap; color: #a8a8a8; }
.files td:nth-child(2) { padding-left: 10px; }
.files td:nth-child(3) { padding-left: 13px; }
.files td.end { background: #232323; border: 0; padding-left: 4px; overflow: visible; }
.files .sel td { background: #303030; }
.f { display: flex; align-items: center; height: 36px; padding: 0 3px 0 32px; gap: 2px; font-family: Inter, sans-serif; color: #9d9d9d; }
.f span { flex: 1; height: 36px; padding-left: 4px; line-height: 38px; }
.sel .f span { background: #a0a0a0; color: #222; }
.kid { padding-left: 70px; }
.open { padding-left: 6px; }
.open .tw { margin-right: 10px; }
.open .fo { width: 28px; height: 20px; margin-right: 2px; }
.ic { width: 32px; height: 26px; }
.sw { display: block; width: 20px; height: 20px; background: #a89674; border: 1px solid #161616; }
.sw.y { background: #e3d94c; }
.fill { flex: 1; display: flex; justify-content: flex-end; }
.gutter { width: 34px; background: #232323; }
.pfoot { display: flex; height: 36px; flex: none; align-items: center; border-top: 2px solid #000; padding: 0 34px 0 6px; gap: 20px; }
.bpc { width: 96px; height: 30px; margin: 0 -7px 0 -11px; background: #1b1b1b; border: 2px solid #222; border-radius: 4px; font-size: 20px; line-height: 24px; color: #b0b0b0; flex: none; }
.hscroll { flex: 1; align-self: stretch; margin: -2px 0 2px -4px; padding: 2px; background: #1b1b1b; }
.hscroll i { display: block; width: 122px; height: 30px; border-radius: 15px; background: #303030; }

/* essential graphics */
.eg .tab { margin-left: 20px; color: #c4c4c4; }
.eg-top { display: flex; padding: 20px 0 43px 17px; flex: none; }
.poster { width: 354px; height: 200px; margin-bottom: -2px; background: #000; border: 2px solid #303030; padding: 148px 0 0 69px; flex: none; }
.telop { width: 74px; color: #fff; background: linear-gradient(#fdf277, #fdf277) 0 100% / 25px 2px no-repeat; }
.telop small { display: block; width: 52px; height: 9px; background: #222; font-size: 8px; line-height: 9px; }
.telop b { display: block; font-size: 18px; line-height: 22px; font-weight: 500; }
.eg-form { flex: 1; display: grid; grid-template-columns: 128px minmax(0, 1fr); grid-auto-rows: 34px; gap: 20px 14px; align-items: center; text-align: right; }
.eg-form .field, .eg-form .select { height: 34px; border-right: 0; border-radius: 5px 0 0 5px; }
.flat { grid-column: 2; height: 34px; background: #1c1c1c; border: 2px solid #2f2f2f; border-right: 0; line-height: 28px; }
.scroller { height: 859px; flex: none; margin: 0 16px 0 17px; border: 2px solid #2d2d2d; border-radius: 5px; background: #1d1d1d; display: grid; grid-template: 835px 20px / minmax(0, 1fr) 22px; }
.props { overflow: hidden; }
.vbar { margin: 45px 2px 4px 0; border-radius: 10px; background: #333; }
.hbar { margin-right: 25px; border-radius: 10px; background: #303030; }
.group { padding-bottom: 5px; border-bottom: 2px solid #2b2b2b; }
.group.top { padding-top: 2px; }
.sub { display: flex; align-items: center; height: 49px; padding-left: 102px; }
.sub > label, .sub > span { width: 209px; padding-top: 2px; }
.sub .select { width: 440px; height: 38px; margin-bottom: 2px; }
output { color: #3d9be9; font-size: 20px; }
.sub output { padding: 0 0 6px 14px; width: 108px; }
input[type=range] { appearance: none; height: 34px; }
input[type=range]::-webkit-slider-runnable-track { height: 4px; background: #464646; }
input[type=range]::-webkit-slider-thumb { appearance: none; width: 28px; height: 28px; margin-top: -12px; border: 4px solid #8f8f8f; border-radius: 50%; background: #1d1d1d; box-shadow: 0 0 0 6px #1d1d1d; }
.size { width: 296px; }
input.size::-webkit-slider-runnable-track { background: linear-gradient(90deg, transparent 24px, #464646 24px); }
input.size::-webkit-slider-thumb { width: 32px; height: 32px; margin-top: -14px; }
.fake { display: flex; align-items: center; }
.fake button, .styles button { font-family: "Liberation Serif", serif; font-size: 28px; font-weight: 400; line-height: 30px; color: #b0b0b0; -webkit-text-stroke: 1px; }
.fake button { height: 36px; width: 36px; margin-right: 20px; border: 2px solid transparent; border-radius: 5px; }
.fake .on { color: #2d8ceb; background: #161616; border-color: #2f2f2f; }
.fake .i, .styles .i { font-style: italic; }
.fake .b, .styles .b { font-weight: 700; -webkit-text-stroke: 2px; }
.fake button:nth-child(n+3) { width: 52px; }
.fake small, .styles small { font-size: 20px; }
.head { display: flex; align-items: center; height: 55px; padding: 3px 0 0 66px; white-space: nowrap; }
.head span:first-child { width: 264px; flex: none; }
.head .val { width: 416px; padding-bottom: 6px; flex: none; }
.head a, .len a { color: #3d9be9; font-weight: 500; flex: none; }
.len { display: grid; grid-template-columns: 234px 184px 306px auto; align-items: center; height: 62px; padding-left: 55px; border-bottom: 2px solid #2b2b2b; white-space: nowrap; }
.len label { padding-left: 12px; }
.len output { padding-left: 32px; padding-top: 2px; }
.len a { padding-left: 52px; }
.color { display: grid; grid-template-columns: 45px 254px minmax(0, 1fr); height: 62px; border-bottom: 2px solid #2b2b2b; }
.color span { display: flex; align-items: center; padding: 0 10px 2px 22px; background: #561f1d; border-right: 2px solid #2b2b2b; color: #a99291; }
.color > div { display: flex; align-items: center; gap: 64px; padding-left: 21px; background: #561f1d; }
.color .chip { width: 82px; height: 48px; }
.picked i { background: #484848; }
.color.picked span, .picked > div { background: #773c3a; }
.color.picked span { padding: 0 10px; }
.eg-foot { display: flex; justify-content: space-between; padding: 14px 15px 0 17px; }
.select.add { width: 256px; }
.select.add select { padding-left: 10px; }
.export { width: 586px; height: 38px; border: 3px solid #8f8f8f; border-radius: 19px; line-height: 30px; overflow: hidden; }

/* composition viewer */
.none { margin-left: 50px; }
.comp { margin-left: 106px; padding-right: 2px; gap: 22px; }
.comp .x { margin-right: -8px; }
.comp .sq { margin-top: -4px; }
.comp > svg:not(.menu) { margin-top: -6px; margin-right: -4px; }
.comp .menu { margin-left: -8px; }
.comp .nm { color: #9d9d9d; }
.comp em { font-size: 20px; }
.crumbs { display: flex; align-items: center; height: 50px; padding: 2px 0 0 40px; gap: 20px; font-size: 20px; }
.crumb { display: flex; align-items: center; justify-content: space-between; width: 174px; height: 36px; padding: 0 6px 0 16px; background: #161616; border: 2px solid #2f2f2f; border-radius: 5px; color: #3d9be9; }
.stage { position: relative; flex: 1; min-height: 0; border-top: 2px solid #000; background: #232323; overflow: hidden; }
.guide { position: absolute; border: solid #37332f; border-width: 2px 2px 0 0; }
.g1 { left: 0; top: 65px; width: 940px; height: 344px; border-width: 3px 3px 0 0; }
.g2 { left: 0; top: 182px; width: 928px; height: 227px; }
.g3 { left: 163px; top: 304px; width: 962px; height: 542px; border-width: 3px 2px; }
.black { position: absolute; left: 2px; top: 409px; width: 957px; height: 540px; background: #000; color: #fff; font-family: Lato, sans-serif; }
.black hr { height: 7px; margin: 0; border: 0; background: #fcf25f; }
.black b { display: block; font-size: 51px; line-height: 46px; }
.t1, .t2, .t3, .t4 { position: absolute; }
.t1 { left: 174px; top: 16px; width: 242px; }
.t1 b { margin: 0 -4px; }
.black .low { line-height: 42px; margin-bottom: 2px; }
.t1 span { display: block; width: 186px; height: 28px; line-height: 26px; font-size: 21px; background: #1c1c1c; }
.t2 { left: 173px; top: 183px; width: 252px; }
.t2 p { display: flex; gap: 4px; margin: 0; font-size: 21px; line-height: 28px; }
.t2 span { background: #1c1c1c; width: 101px; padding-right: 7px; text-align: right; }
.t2 span + span { width: 147px; padding-right: 5px; }
.t2 b { margin: 0 -4px; line-height: 49px; }
.t3 { left: 355px; top: 309px; width: 304px; height: 71px; border: 8px double #fcf25f; }
.t3 span { position: absolute; left: 22px; top: -16px; padding: 0 6px; background: #000; font-size: 20px; line-height: 20px; }
.t3 p { margin: 6px 0 0 11px; font-size: 51px; line-height: 44px; font-weight: 300; white-space: nowrap; }
.t3 b { display: inline; font-weight: 900; line-height: 44px; }
.t4 { left: 178px; top: 414px; width: 145px; height: 20px; background: #1c1c1c; }
dialog { position: absolute; left: 7px; right: auto; top: 826px; width: 988px; height: 240px; margin: 0; padding: 0; border: 0; border-radius: 10px; background: #272727; color: #c8c8c8; box-shadow: 0 20px 50px rgba(0, 0, 0, .6); overflow: hidden; }
dialog h2 { margin: 0; height: 45px; background: linear-gradient(#b6b4b6, #a09ea0); border-bottom: 1px solid #888; border-top: 1px solid #d0d0d0; color: #111; text-align: center; font: 400 25px/44px Inter, sans-serif; }
.dbody { display: flex; gap: 40px; padding: 22px 0 0 32px; }
.dbody svg { margin-top: 7px; }
.dbody p { margin: 0; line-height: 38px; white-space: nowrap; }
.dbody span { font-size: 19px; }
.ok { position: absolute; right: 30px; bottom: 30px; width: 160px; height: 38px; border-radius: 19px; background: #2d8ceb; color: #fff; font-size: 21px; font-weight: 500; }
.vfoot { display: flex; align-items: center; gap: 16px; height: 48px; flex: none; border-top: 2px solid #000; padding-left: 13px; }
.vfoot .select { border-color: #222; flex: none; margin: 0 -7px; }
.vfoot .select select { padding: 0 10px; }
.w50 { width: 138px; } .w12 { width: 174px; } .wcam { width: 213px; } .w1 { width: 141px; }
.vfoot .w50 { margin: 0 -10px; }
.vfoot .w1 { margin-left: -2px; }
.maskb { display: grid; place-items: center; width: 40px; height: 36px; margin: 0 -6px; background: #161616; flex: none; border-radius: 4px; }
.time { width: 137px; height: 36px; background: #1c1c1c; border: 2px solid #222; border-radius: 5px; font-size: 20px; flex: none; margin: 0 -6px; }

/* side */
.side nav { display: flex; flex-direction: column; padding: 0 2px; }
.side nav a { height: 60px; padding-left: 22px; line-height: 56px; border-bottom: 4px solid #171717; }
.side nav a:first-child { height: 58px; line-height: 54px; }
.side h2 { display: flex; align-items: center; justify-content: space-between; margin: 0; height: 60px; padding: 0 22px 2px 24px; font-size: 22px; font-weight: 500; color: #c8c8c8; flex: none; }
.side > div { margin: 0 11px; flex: none; }
.chars { display: flex; height: 112px; padding-top: 15px; }
.fontsel { width: 245px; display: grid; gap: 12px; align-content: start; }
.fontsel .select.split { height: 36px; }
.side .split svg { padding: 11px 9px; }
.mid { display: grid; gap: 11px; align-content: start; justify-items: center; margin: 4px 10px 0 8px; }
.paint { margin-top: -1px; }
.metrics { display: grid; align-items: center; border-top: 2px solid #2e2e2e; grid-auto-rows: 43px; }
.tri { width: 12px; height: 12px; color: #8f8f8f; }
.off { color: #555; }
.metrics.a { grid-template-columns: 49px 136px 24px 65px 91px auto; height: 99px; }
.metrics.b { grid-template-columns: 49px 90px 23px 1fr; grid-auto-rows: 58px; height: 62px; }
.metrics.c { grid-template-columns: 49px 90px 72px 63px 91px auto; padding-top: 4px; height: 105px; }
.styles { display: grid; grid-template-columns: 52px 52px 50px 64px 50px 40px; justify-items: start; height: 58px; align-items: center; border-top: 2px solid #2e2e2e; padding-left: 51px; }
.styles sup, .styles sub { font-size: 15px; line-height: 0; }
.checks { display: flex; height: 50px; align-items: center; padding-left: 11px; white-space: nowrap; }
.checks label { display: flex; align-items: center; gap: 6px; width: 196px; flex: none; }
.checks input { appearance: none; width: 28px; height: 28px; border: 3px solid #8f8f8f; border-radius: 4px; flex: none; }

/* timeline */
.timeline { flex: 686 1 0; min-height: 0; }
.timeline .tabs { overflow: hidden; }
.timeline .tab { font-size: 20px; gap: 22px; }
.timeline .tab .sq { margin-top: -4px; }
.timeline .tl0 { margin: 0 68px 0 22px; padding: 8px 0 0; width: 220px; gap: 16px; }
.tl0 .x { width: 14px; }
.tl0 .sq { margin-right: 6px; }
.t398 { width: 398px; } .t222 { width: 222px; } .t310 { width: 310px; }
.timeline .queue { width: 262px; padding-left: 4px; font-size: 22px; }
.timeline .last { width: 272px; padding-right: 0; }
.tl { flex: 1; min-height: 0; display: grid; grid-template: minmax(0, 1fr) / 1160px minmax(0, 1fr) 16px; }
.layers { display: flex; flex-direction: column; overflow: hidden; padding-left: 2px; }
.bar { display: flex; height: 74px; flex: none; padding: 0 0 0 20px; }
.tc { width: 212px; color: #1b6bb0; white-space: nowrap; line-height: 28px; padding-top: 10px; font-size: 23px; }
.tc b { display: block; font-size: 28px; line-height: 32px; padding-left: 20px; font-weight: 600; color: #3d9be9; }
.bar .search { width: 524px; margin-top: 19px; }
.tools { display: flex; gap: 32px; align-items: center; padding: 2px 0 0 30px; }
.tools svg:nth-child(n+4) { margin-left: -10px; }
.tools svg:last-child { margin-left: 6px; }
.cols { display: grid; grid-template-columns: 135px 64px 66px 354px 273px 236px auto; height: 40px; flex: none; align-items: center; background: #303030; border: solid #000; border-width: 2px 0; font-size: 24px; white-space: nowrap; color: #a8a8a8; }
.cols div + div { border-left: 2px solid #111; height: 24px; line-height: 22px; display: flex; align-items: center; }
.k1 { display: flex; align-items: center; justify-content: space-between; padding: 0 14px 0 11px; }
.cols .k2 { padding-left: 25px; } .cols .k3 { padding-left: 8px; font-size: 20px; } .cols .k4 { padding-left: 10px; }
.cols .k5 { padding: 0 26px 0 8px; justify-content: space-between; } .cols .k6 { padding-left: 10px; }
.fx { font: italic 26px/26px "Liberation Serif", serif; color: #b0b0b0; }
.peek { display: flex; height: 9px; flex: none; background: #2e2e2e; border-bottom: 2px solid #1d1d1d; }
.peek i { height: 3px; background: #1d1d1d; }
.peek .d1 { width: 26px; margin-left: 8px; } .peek .d2 { width: 56px; margin-left: 34px; }
.peek .red { width: 28px; height: 4px; margin-left: 46px; background: #b03030; }
.peek .blk { width: 32px; height: 7px; margin-left: 72px; background: #000; }
.peek .d3 { width: 236px; margin-left: 324px; } .peek .d4 { width: 178px; height: 7px; margin-left: 76px; }
.rows li { display: flex; align-items: center; height: 38px; border-bottom: 2px solid #1d1d1d; background: #262626; font: 22px/28px Inter, "Noto Sans CJK JP", sans-serif; }
.rows .l0, .rows .l2, .rows .l3 { font-size: 20px; }
.rows span, .rows a { padding-top: 2px; }
.l0 { padding-left: 185px; gap: 19px; }
.l1 { padding-left: 8px; }
.l1 .fx { width: 26px; height: 28px; padding-left: 4px; background: #1b1b1b; margin-right: 190px; }
.l1 .tw { margin-right: 18px; }
.l1 span { width: 370px; }
.rows a { color: #3d9be9; font-size: 20px; }
.l2 { padding-left: 292px; }
.l2 span { width: 300px; margin-left: 14px; }
.l2 .chip { width: 49px; height: 36px; margin-right: 3px; }
.pp { width: 48px; height: 36px; margin-right: 201px; }
.sp { width: 24px; height: 22px; margin-bottom: 4px; }
.l3 { padding-left: 261px; }
.l3 span { width: 335px; margin-left: 26px; }

.time-area { position: relative; display: flex; flex-direction: column; border-left: 2px solid #000; background: #262626; overflow: hidden; }
.nav { display: flex; height: 22px; margin-top: 13px; flex: none; background: #000; padding: 2px 0; gap: 2px; }
.nav i, .work > i { width: 12px; margin: 0; background: #2d8ceb; border-radius: 10px 0 0 10px; flex: none; }
.nav i.r, .work > i.r { border-radius: 0 10px 10px 0; }
.nav > div { flex: 1; background: #686868; }
.rulerbox { height: 37px; flex: none; overflow: hidden; }
.ruler { display: grid; grid-template-columns: repeat(21, minmax(0, 1fr)); width: calc((100% - 28px) * 1.05); margin-left: calc(14px - (100% - 28px) / 40); height: 37px; color: #8a8a8a; }
.ruler li { text-align: center; line-height: 26px; background: linear-gradient(#8a8a8a, #8a8a8a) 50% 100% / 2px 10px no-repeat; }
.ruler .zero { padding-left: 18px; background-position-x: 52px; }
.work { display: flex; height: 34px; flex: none; background: #000; padding: 2px 0; gap: 2px; }
.work > div { flex: 1; position: relative; background: #636363; border-top: 2px solid #7a7a7a; }
.work > i { width: 10px; margin-left: 2px; }
.work > i.r { margin: 0 2px 0 0; }
.mark { position: absolute; top: -2px; margin-left: -10px; color: #111; width: 48px; }
.mark svg { width: 48px; height: 30px; }
.mark b { position: absolute; left: 11px; top: 0; width: 34px; line-height: 25px; text-align: center; font-weight: 400; }
.cache { height: 8px; flex: none; border-bottom: 2px solid #000; padding: 0 14px; }
.cache > div { position: relative; height: 6px; }
.cache i { position: absolute; height: 6px; background: #14bf22; }
.clip { height: 9px; flex: none; padding: 1px 14px 0 24px; background: #2e2e2e; border-bottom: 2px solid #1d1d1d; }
.clip div { height: 5px; background: #7e3b3b; }
.tracks { padding: 0 14px; }
.tracks li { height: 38px; padding-top: 7px; background: #333; border-bottom: 2px solid #1f1f1f; }
.tracks svg { width: 14px; height: 22px; margin-left: calc(34.700% - 7px); }
.playlane { position: absolute; left: 14px; right: 14px; top: 15px; bottom: 0; pointer-events: none; }
.playhead { position: absolute; left: 34.700%; top: 0; bottom: 0; width: 2px; margin-left: -1px; background: #2d8ceb; padding-top: 28px; }
.playhead svg { margin-left: -10px; }
.strip { display: flex; flex-direction: column; background: #282828; padding-top: 78px; overflow: hidden; }
.strip svg + svg { margin: 18px 0 20px; }
.strip i { display: block; width: 30px; height: 290px; margin-left: 2px; border-radius: 15px; background: #303030; box-shadow: 0 0 0 400px #1b1b1b; clip-path: inset(-20px -10px -400px -10px); }
.tfoot { display: flex; height: 20px; flex: none; overflow: hidden; background: #262626; }
.fl { display: flex; gap: 12px; width: 625px; padding: 4px 0 0 12px; border-top: 2px solid #000; }
.switch { width: 268px; height: 32px; margin-top: 2px; background: #1c1c1c; border: 2px solid #303030; border-radius: 4px; line-height: 24px; padding-bottom: 4px; }
.zoom { display: flex; gap: 16px; padding: 9px 0 0 286px; }
.zoom input { width: 100px; height: 10px; margin-top: 0; }
.zoom input::-webkit-slider-thumb { width: 18px; height: 18px; margin-top: -8px; border-width: 3px; box-shadow: none; background: #262626; }
.zoom input::-webkit-slider-runnable-track { height: 3px; }
```
